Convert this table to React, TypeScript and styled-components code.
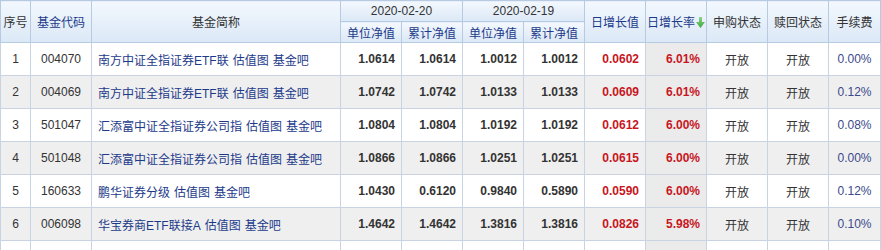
import styled, { createGlobalStyle } from 'styled-components';

const GlobalStyle = createGlobalStyle`
  html, body {
    margin: 0;
    padding: 0;
    background: #ffffff;
    overflow: hidden;
  }
  body {
    font-family: "Liberation Sans", "Noto Sans CJK SC", Arial, sans-serif;
    font-size: 12px;
    color: #333;
  }
`;

interface Fund {
  no: number;
  code: string;
  name: string;
  nav1: string;
  acc1: string;
  nav2: string;
  acc2: string;
  growth: string;
  rate: string;
  buy: string;
  redeem: string;
  fee: string;
}

const funds: Fund[] = [
  { no: 1, code: '004070', name: '南方中证全指证券ETF联', nav1: '1.0614', acc1: '1.0614', nav2: '1.0012', acc2: '1.0012', growth: '0.0602', rate: '6.01%', buy: '开放', redeem: '开放', fee: '0.00%' },
  { no: 2, code: '004069', name: '南方中证全指证券ETF联', nav1: '1.0742', acc1: '1.0742', nav2: '1.0133', acc2: '1.0133', growth: '0.0609', rate: '6.01%', buy: '开放', redeem: '开放', fee: '0.12%' },
  { no: 3, code: '501047', name: '汇添富中证全指证券公司指', nav1: '1.0804', acc1: '1.0804', nav2: '1.0192', acc2: '1.0192', growth: '0.0612', rate: '6.00%', buy: '开放', redeem: '开放', fee: '0.08%' },
  { no: 4, code: '501048', name: '汇添富中证全指证券公司指', nav1: '1.0866', acc1: '1.0866', nav2: '1.0251', acc2: '1.0251', growth: '0.0615', rate: '6.00%', buy: '开放', redeem: '开放', fee: '0.00%' },
  { no: 5, code: '160633', name: '鹏华证券分级', nav1: '1.0430', acc1: '0.6120', nav2: '0.9840', acc2: '0.5890', growth: '0.0590', rate: '6.00%', buy: '开放', redeem: '开放', fee: '0.12%' },
  { no: 6, code: '006098', name: '华宝券商ETF联接A', nav1: '1.4642', acc1: '1.4642', nav2: '1.3816', acc2: '1.3816', growth: '0.0826', rate: '5.98%', buy: '开放', redeem: '开放', fee: '0.10%' },
  { no: 7, code: '006099', name: '华宝券商ETF联接C', nav1: '1.4598', acc1: '1.4598', nav2: '1.3774', acc2: '1.3774', growth: '0.0824', rate: '5.98%', buy: '开放', redeem: '开放', fee: '0.00%' },
];

const colWidths = [30, 61, 249, 61, 61, 61, 61, 61, 61, 61, 61, 52];

const Table = styled.table`
  border-collapse: collapse;
  table-layout: fixed;
  width: 880px;
`;

const HeadCell = styled.th<{ $link?: boolean }>`
  background: linear-gradient(#f3f8fe, #dbe8f6);
  border: 1px solid #b8cae2;
  color: ${p => (p.$link ? '#1c3a8a' : '#333')};
  font-family: "Noto Sans CJK SC", "Liberation Sans", sans-serif;
  font-weight: normal;
  font-size: 12px;
  padding: 0;
  height: 20px;
  text-align: center;
  white-space: nowrap;
  overflow: hidden;
`;

const DateCell = styled(HeadCell)`
  font-family: "Liberation Sans", Arial, sans-serif;
  color: #333;
`;

const SortIcon = styled.svg`
  vertical-align: -1px;
  margin-left: 1px;
`;

const Row = styled.tr<{ $alt: boolean }>`
  background: ${p => (p.$alt ? '#efefef' : '#ffffff')};
`;

const Cell = styled.td<{ $align?: 'left' | 'right' | 'center'; $sorted?: boolean }>`
  border: 1px solid #c9d3e1;
  height: 32px;
  padding: 0 6px;
  text-align: ${p => p.$align || 'center'};
  white-space: nowrap;
  overflow: hidden;
  background: ${p => (p.$sorted ? '#ebebeb' : 'transparent')};
`;

const Num = styled.span<{ $red?: boolean }>`
  font-family: "Liberation Sans", Arial, sans-serif;
  font-weight: bold;
  color: ${p => (p.$red ? '#c8161d' : '#333')};
`;

const Plain = styled.span`
  font-family: "Liberation Sans", Arial, sans-serif;
  color: #333;
`;

const Fee = styled.span`
  font-family: "Liberation Sans", Arial, sans-serif;
  color: #3a4a8c;
`;

const Status = styled.span`
  font-family: "Noto Sans CJK SC", sans-serif;
  color: #333;
`;

const NameLink = styled.a`
  font-family: "Liberation Sans", "Noto Sans CJK SC", sans-serif;
  color: #1c3a8a;
  text-decoration: none;
  margin-right: 4px;
`;

function DownArrow() {
  return (
    <SortIcon width="9" height="11" viewBox="0 0 9 11">
      <defs>
        <linearGradient id="ag" x1="0" y1="0" x2="0" y2="1">
          <stop offset="0" stopColor="#8fd38a" />
          <stop offset="1" stopColor="#3fa83a" />
        </linearGradient>
      </defs>
      <path d="M3 0h3v5h3L4.5 11 0 5h3z" fill="url(#ag)" />
    </SortIcon>
  );
}

export default function App() {
  return (
    <>
      <GlobalStyle />
      <Table>
        <colgroup>
          {colWidths.map((w, i) => (
            <col key={i} style={{ width: w }} />
          ))}
        </colgroup>
        <thead>
          <tr>
            <HeadCell rowSpan={2}>序号</HeadCell>
            <HeadCell rowSpan={2} $link>基金代码</HeadCell>
            <HeadCell rowSpan={2}>基金简称</HeadCell>
            <DateCell colSpan={2}>2020-02-20</DateCell>
            <DateCell colSpan={2}>2020-02-19</DateCell>
            <HeadCell rowSpan={2} $link>日增长值</HeadCell>
            <HeadCell rowSpan={2} $link>
              日增长率
              <DownArrow />
            </HeadCell>
            <HeadCell rowSpan={2}>申购状态</HeadCell>
            <HeadCell rowSpan={2}>赎回状态</HeadCell>
            <HeadCell rowSpan={2}>手续费</HeadCell>
          </tr>
          <tr>
            <HeadCell $link>单位净值</HeadCell>
            <HeadCell $link>累计净值</HeadCell>
            <HeadCell $link>单位净值</HeadCell>
            <HeadCell $link>累计净值</HeadCell>
          </tr>
        </thead>
        <tbody>
          {funds.map((f, i) => (
            <Row key={f.code} $alt={i % 2 === 1}>
              <Cell><Plain>{f.no}</Plain></Cell>
              <Cell><Plain>{f.code}</Plain></Cell>
              <Cell $align="left">
                <NameLink>{f.name}</NameLink>
                <NameLink>估值图</NameLink>
                <NameLink>基金吧</NameLink>
              </Cell>
              <Cell $align="right"><Num>{f.nav1}</Num></Cell>
              <Cell $align="right"><Num>{f.acc1}</Num></Cell>
              <Cell $align="right"><Num>{f.nav2}</Num></Cell>
              <Cell $align="right"><Num>{f.acc2}</Num></Cell>
              <Cell $align="right"><Num $red>{f.growth}</Num></Cell>
              <Cell $align="right" $sorted><Num $red>{f.rate}</Num></Cell>
              <Cell><Status>{f.buy}</Status></Cell>
              <Cell><Status>{f.redeem}</Status></Cell>
              <Cell><Fee>{f.fee}</Fee></Cell>
            </Row>
          ))}
        </tbody>
      </Table>
    </>
  );
}
